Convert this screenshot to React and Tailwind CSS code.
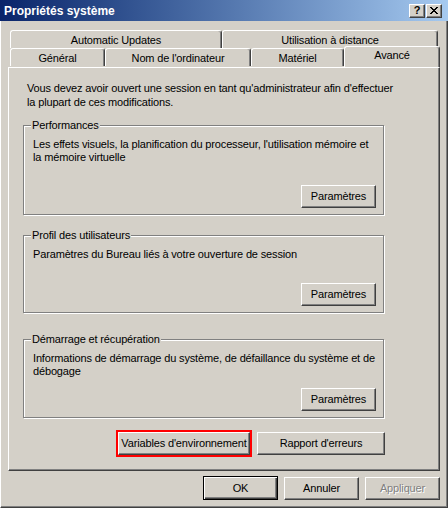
import React from 'react'

const raised =
  'border border-t-white border-l-white border-r-[#404040] border-b-[#404040] shadow-[inset_-1px_-1px_0_#808080]'

function Btn({ children, className = '', disabled = false, isDefault = false }) {
  const frame = isDefault
    ? 'border border-black shadow-[inset_1px_1px_0_#fff,inset_-1px_-1px_0_#404040,inset_-2px_-2px_0_#808080]'
    : raised
  return (
    <button
      className={`flex items-center justify-center h-[23px] bg-[#d4d0c8] leading-[13px] whitespace-nowrap ${frame} ${
        disabled ? 'text-[#808080] [text-shadow:1px_1px_0_#fff]' : 'text-black'
      } ${className}`}
    >
      {children}
    </button>
  )
}

function Group({ label, className = '', children }) {
  return (
    <div
      className={`relative flex flex-col w-[361px] border border-[#808080] shadow-[inset_1px_1px_0_#fff,1px_1px_0_#fff] pl-[9px] pr-[7px] pt-[12px] pb-[6px] ${className}`}
    >
      <span className="absolute -top-[7px] left-[7px] bg-[#d4d0c8] px-[1px] leading-[13px]">{label}</span>
      {children}
      <div className="mt-auto flex justify-end">
        <Btn className="w-[75px]">Paramètres</Btn>
      </div>
    </div>
  )
}

function Tab({ children, className = '', selected = false }) {
  return (
    <div
      className={`flex items-center justify-center rounded-t-[3px] border-t border-l border-r border-t-white border-l-white border-r-[#404040] shadow-[inset_-1px_0_0_#808080] bg-[#d4d0c8] ${
        selected ? 'relative z-10 h-[21px] -mt-[2px] pb-[3px]' : 'h-[18px] pt-[2px]'
      } ${className}`}
    >
      {children}
    </div>
  )
}

export default function App() {
  return (
    <div className="w-[448px] h-[508px] flex flex-col bg-[#d4d0c8] text-black text-[11px] tracking-[-0.15px] font-['Liberation_Sans',Arial,sans-serif] select-none">
      <div className="h-[21px] shrink-0 flex items-center justify-between pl-[4px] pr-[6px] bg-gradient-to-r from-[#0a246a] to-[#a6caf0]">
        <span className="text-white font-bold text-[12px] tracking-normal">Propriétés système</span>
        <div className="flex gap-[1px]">
          <div className={`w-[16px] h-[14px] flex items-center justify-center bg-[#d4d0c8] font-bold text-[11px] leading-none ${raised}`}>
            ?
          </div>
          <div className={`w-[16px] h-[14px] flex items-center justify-center bg-[#d4d0c8] ${raised}`}>
            <svg width="8" height="7" viewBox="0 0 8 7" shapeRendering="crispEdges">
              <path d="M0 0h2v1H0zM6 0h2v1H6zM1 1h2v1H1zM5 1h2v1H5zM2 2h4v1H2zM3 3h2v1H3zM2 4h4v1H2zM1 5h2v1H1zM5 5h2v1H5zM0 6h2v1H0zM6 6h2v1H6z" fill="#000" />
            </svg>
          </div>
        </div>
      </div>

      <div className="flex-1 flex flex-col border-l border-r border-b border-l-white border-r-[#404040] border-b-[#404040] shadow-[inset_-1px_-1px_0_#808080] pl-[7px] pt-[9px]">
        <div className="flex ml-[2px]">
          <Tab className="w-[212px]">Automatic Updates</Tab>
          <Tab className="w-[216px]">Utilisation à distance</Tab>
        </div>
        <div className="flex ml-[2px]">
          <Tab className="w-[95px]">Général</Tab>
          <Tab className="w-[146px]">Nom de l'ordinateur</Tab>
          <Tab className="w-[93px]">Matériel</Tab>
          <Tab selected className="w-[96px]">Avancé</Tab>
        </div>

        <div className={`w-[432px] h-[404px] shrink-0 flex flex-col pl-[14px] pt-[13px] ${raised}`}>
          <p className="ml-[4px] leading-[14px] whitespace-nowrap">
            Vous devez avoir ouvert une session en tant qu'administrateur afin d'effectuer
            <br />
            la plupart de ces modifications.
          </p>

          <Group label="Performances" className="mt-[16px] h-[90px]">
            <p className="leading-[13px] whitespace-nowrap">
              Les effets visuels, la planification du processeur, l'utilisation mémoire et
              <br />
              la mémoire virtuelle
            </p>
          </Group>

          <Group label="Profil des utilisateurs" className="mt-[20px] h-[78px]">
            <p className="leading-[13px] whitespace-nowrap">Paramètres du Bureau liés à votre ouverture de session</p>
          </Group>

          <Group label="Démarrage et récupération" className="mt-[26px] h-[79px]">
            <p className="leading-[13px] whitespace-nowrap">
              Informations de démarrage du système, de défaillance du système et de
              <br />
              débogage
            </p>
          </Group>

          <div className="mt-[14px] w-[362px] flex justify-end gap-[7px]">
            <div className="outline-2 outline-[#ff0000]">
              <Btn className="w-[132px]">Variables d'environnement</Btn>
            </div>
            <Btn className="w-[128px]">Rapport d'erreurs</Btn>
          </div>
        </div>

        <div className="w-[432px] flex justify-end gap-[6px] mt-[5px]">
          <Btn isDefault className="w-[75px] h-[24px]">OK</Btn>
          <Btn className="w-[75px] mt-[1px]">Annuler</Btn>
          <Btn disabled className="w-[75px] mt-[1px]">Appliquer</Btn>
        </div>
      </div>
    </div>
  )
}
